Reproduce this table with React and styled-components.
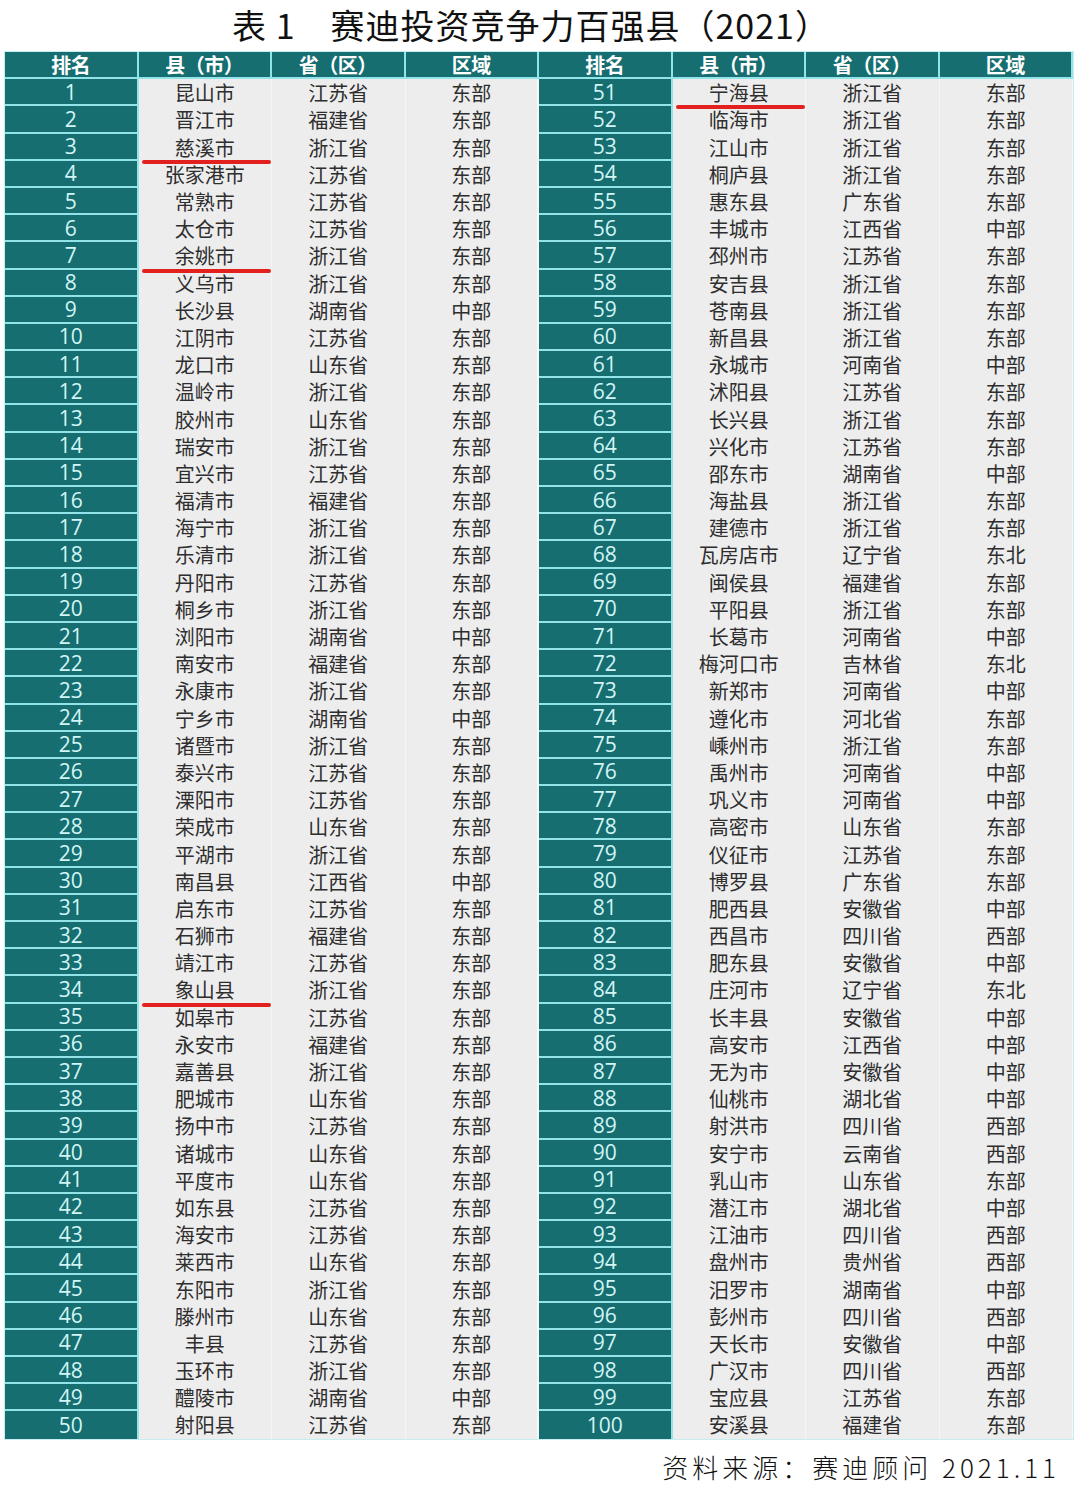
import React from "react";
import styled, { createGlobalStyle } from "styled-components";

const GlobalStyle = createGlobalStyle`
  html, body {
    margin: 0;
    padding: 0;
    background: #ffffff;
  }
  body {
    font-family: "Noto Sans CJK SC", "Noto Sans", sans-serif;
  }
`;

const LEFT = `昆山市 江苏省 东部
晋江市 福建省 东部
慈溪市 浙江省 东部
张家港市 江苏省 东部
常熟市 江苏省 东部
太仓市 江苏省 东部
余姚市 浙江省 东部
义乌市 浙江省 东部
长沙县 湖南省 中部
江阴市 江苏省 东部
龙口市 山东省 东部
温岭市 浙江省 东部
胶州市 山东省 东部
瑞安市 浙江省 东部
宜兴市 江苏省 东部
福清市 福建省 东部
海宁市 浙江省 东部
乐清市 浙江省 东部
丹阳市 江苏省 东部
桐乡市 浙江省 东部
浏阳市 湖南省 中部
南安市 福建省 东部
永康市 浙江省 东部
宁乡市 湖南省 中部
诸暨市 浙江省 东部
泰兴市 江苏省 东部
溧阳市 江苏省 东部
荣成市 山东省 东部
平湖市 浙江省 东部
南昌县 江西省 中部
启东市 江苏省 东部
石狮市 福建省 东部
靖江市 江苏省 东部
象山县 浙江省 东部
如皋市 江苏省 东部
永安市 福建省 东部
嘉善县 浙江省 东部
肥城市 山东省 东部
扬中市 江苏省 东部
诸城市 山东省 东部
平度市 山东省 东部
如东县 江苏省 东部
海安市 江苏省 东部
莱西市 山东省 东部
东阳市 浙江省 东部
滕州市 山东省 东部
丰县 江苏省 东部
玉环市 浙江省 东部
醴陵市 湖南省 中部
射阳县 江苏省 东部`;

const RIGHT = `宁海县 浙江省 东部
临海市 浙江省 东部
江山市 浙江省 东部
桐庐县 浙江省 东部
惠东县 广东省 东部
丰城市 江西省 中部
邳州市 江苏省 东部
安吉县 浙江省 东部
苍南县 浙江省 东部
新昌县 浙江省 东部
永城市 河南省 中部
沭阳县 江苏省 东部
长兴县 浙江省 东部
兴化市 江苏省 东部
邵东市 湖南省 中部
海盐县 浙江省 东部
建德市 浙江省 东部
瓦房店市 辽宁省 东北
闽侯县 福建省 东部
平阳县 浙江省 东部
长葛市 河南省 中部
梅河口市 吉林省 东北
新郑市 河南省 中部
遵化市 河北省 东部
嵊州市 浙江省 东部
禹州市 河南省 中部
巩义市 河南省 中部
高密市 山东省 东部
仪征市 江苏省 东部
博罗县 广东省 东部
肥西县 安徽省 中部
西昌市 四川省 西部
肥东县 安徽省 中部
庄河市 辽宁省 东北
长丰县 安徽省 中部
高安市 江西省 中部
无为市 安徽省 中部
仙桃市 湖北省 中部
射洪市 四川省 西部
安宁市 云南省 西部
乳山市 山东省 东部
潜江市 湖北省 中部
江油市 四川省 西部
盘州市 贵州省 西部
汨罗市 湖南省 中部
彭州市 四川省 西部
天长市 安徽省 中部
广汉市 四川省 西部
宝应县 江苏省 东部
安溪县 福建省 东部`;

const parse = (text, start) =>
  text.split("\n").map((line, i) => {
    const [county, province, region] = line.trim().split(" ");
    return { rank: start + i, county, province, region };
  });

const left = parse(LEFT, 1);
const right = parse(RIGHT, 51);

// ranks underlined in red in the original
const marked = [3, 7, 34, 51];

const Page = styled.div`
  width: 1080px;
  height: 1497px;
  overflow: hidden;
`;

const Title = styled.h1`
  margin: 0;
  padding: 2px 18px 0 0;
  height: 48px;
  line-height: 46px;
  box-sizing: border-box;
  text-align: center;
  font-size: 34px;
  font-weight: 400;
  letter-spacing: 1px;
  color: #111;
  font-family: "Noto Sans CJK SC", sans-serif;
`;

const Table = styled.div`
  display: grid;
  grid-template-columns: repeat(8, 1fr);
  grid-auto-rows: 27.2px;
  width: 1068px;
  margin: 4px 0 0 5px;
  background: #ededed;
  box-shadow: 0 0 0 1px #c6eef0;
`;

const HeadCell = styled.div`
  display: flex;
  align-items: center;
  justify-content: center;
  background: #176e71;
  color: #ffffff;
  font-size: 20px;
  font-weight: 700;
  border-right: 2px solid #93e4e9;
  border-bottom: 2px solid #93e4e9;
  box-sizing: border-box;
  letter-spacing: -0.5px;
`;

const Rank = styled.div`
  display: flex;
  align-items: center;
  justify-content: center;
  background: #176e71;
  color: #d2f5f5;
  font-family: "Open Sans", "Liberation Sans", sans-serif;
  font-size: 21px;
  border-right: 2px solid #93e4e9;
  border-bottom: 2px solid #93e4e9;
  box-sizing: border-box;
  ${(p) => p.$last && "border-bottom: none;"}
`;

const Cell = styled.div`
  position: relative;
  display: flex;
  align-items: center;
  justify-content: center;
  color: #2e2e2e;
  font-size: 20px;
  border-right: ${(p) => (p.$edge ? "2px solid #f7f7f7" : "1px solid #f6f6f6")};
  box-sizing: border-box;
`;

const Mark = styled.span`
  position: absolute;
  left: 3px;
  right: 0;
  bottom: -3px;
  height: 4px;
  border-radius: 2px;
  background: #e2201d;
  z-index: 2;
`;

const Footer = styled.div`
  margin-top: 10px;
  height: 36px;
  line-height: 36px;
  text-align: right;
  padding-right: 20px;
  font-size: 26px;
  letter-spacing: 4px;
  color: #111;
  font-family: "Noto Sans CJK SC", sans-serif;
  font-weight: 300;
`;

const heads = ["排名", "县（市）", "省（区）", "区域"];

function Entry({ item, edge, last }) {
  return (
    <>
      <Rank $last={last}>{item.rank}</Rank>
      <Cell>
        {item.county}
        {marked.includes(item.rank) && <Mark />}
      </Cell>
      <Cell>{item.province}</Cell>
      <Cell $edge={edge}>{item.region}</Cell>
    </>
  );
}

export default function App() {
  return (
    <Page>
      <GlobalStyle />
      <Title>表 1　赛迪投资竞争力百强县（2021）</Title>
      <Table>
        {[...heads, ...heads].map((h, i) => (
          <HeadCell key={i}>{h}</HeadCell>
        ))}
        {left.map((item, i) => (
          <React.Fragment key={item.rank}>
            <Entry item={item} edge last={i === 49} />
            <Entry item={right[i]} last={i === 49} />
          </React.Fragment>
        ))}
      </Table>
      <Footer>资料来源：赛迪顾问 2021.11</Footer>
    </Page>
  );
}
